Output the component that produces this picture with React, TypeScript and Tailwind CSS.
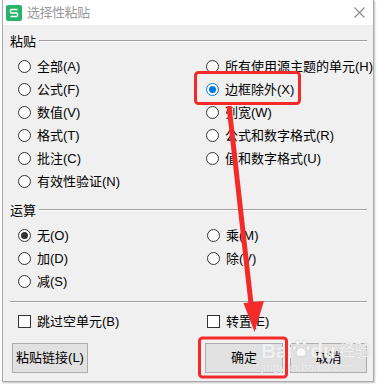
import React from "react";

const FONT = { fontFamily: '"Liberation Sans", "Noto Sans CJK SC", sans-serif' };

type RadioProps = { label: string; checked?: boolean; tone?: "blue" | "dark" };

function Radio({ label, checked = false, tone = "dark" }: RadioProps) {
    const ring = checked && tone === "blue" ? "border-[#0078d7]" : "border-[#333333]";
    const dot = tone === "blue" ? "bg-[#0078d7]" : "bg-[#333333]";
    return (
        <div className="h-[23px] flex items-center gap-[6px]">
            <span className={`w-[13px] h-[13px] rounded-full border ${ring} bg-white flex items-center justify-center flex-shrink-0`}>
                {checked && <span className={`w-[7px] h-[7px] rounded-full ${dot}`} />}
            </span>
            <span className="text-[13px] leading-none text-black whitespace-nowrap">{label}</span>
        </div>
    );
}

function Check({ label }: { label: string }) {
    return (
        <div className="h-[23px] flex items-center gap-[6px]">
            <span className="w-[13px] h-[13px] border border-[#333333] bg-white flex-shrink-0" />
            <span className="text-[13px] leading-none text-black whitespace-nowrap">{label}</span>
        </div>
    );
}

function Section({ title }: { title: string }) {
    return (
        <div className="h-[16px] flex items-center pl-[7px] pr-[6px] gap-[3px]">
            <span className="text-[13px] leading-none text-black">{title}</span>
            <div className="flex-1 flex flex-col">
                <div className="h-px bg-[#a0a0a0]" />
                <div className="h-px bg-white" />
            </div>
        </div>
    );
}

function Btn({ label, className = "" }: { label: string; className?: string }) {
    return (
        <div className={`h-[30px] w-[76px] bg-[#e1e1e1] border border-[#adadad] flex items-center justify-center text-[13px] text-black ${className}`}>
            {label}
        </div>
    );
}

export default function App() {
    return (
        <div className="relative w-[377px] h-[384px] bg-white overflow-hidden" style={FONT}>
            {/* dialog */}
            <div className="ml-[2px] w-[372px] h-[382px] flex flex-col border-x border-b border-[#a8a8a8] bg-[#f0f0f0] shadow-[1px_1px_2px_rgba(0,0,0,0.25)]">
                {/* title bar */}
                <div className="h-[25px] bg-white flex items-center pl-[3px] pr-[8px] flex-shrink-0">
                    <div className="w-[16px] h-[16px] rounded-[2px] bg-[#27b46a] flex items-center justify-center">
                        <svg width="10" height="10" viewBox="0 0 10 10">
                            <path d="M8.5 1.5H2.2L1.5 2.2V4.3L2.2 5H7.8L8.5 5.7V7.8L7.8 8.5H1.5" fill="none" stroke="white" strokeWidth="1.4" />
                        </svg>
                    </div>
                    <span className="ml-[5px] text-[13px] text-[#9a9a9a] tracking-[-0.5px]">选择性粘贴</span>
                    <div className="flex-1" />
                    <svg width="11" height="11" viewBox="0 0 11 11">
                        <path d="M0.5 0.5L10.5 10.5M10.5 0.5L0.5 10.5" stroke="#8a8a8a" strokeWidth="1.1" />
                    </svg>
                </div>

                {/* body */}
                <div className="flex-1 flex flex-col pt-[8px]">
                    <Section title="粘贴" />
                    <div className="flex pl-[15px] mt-[6px]">
                        <div className="w-[189px] flex flex-col">
                            <Radio label="全部(A)" />
                            <Radio label="公式(F)" />
                            <Radio label="数值(V)" />
                            <Radio label="格式(T)" />
                            <Radio label="批注(C)" />
                            <Radio label="有效性验证(N)" />
                        </div>
                        <div className="flex flex-col">
                            <Radio label="所有使用源主题的单元(H)" />
                            <Radio label="边框除外(X)" checked tone="blue" />
                            <Radio label="列宽(W)" />
                            <Radio label="公式和数字格式(R)" />
                            <Radio label="值和数字格式(U)" />
                        </div>
                    </div>

                    <div className="mt-[9px]">
                        <Section title="运算" />
                    </div>
                    <div className="flex pl-[15px] mt-[6px]">
                        <div className="w-[189px] flex flex-col">
                            <Radio label="无(O)" checked />
                            <Radio label="加(D)" />
                            <Radio label="减(S)" />
                        </div>
                        <div className="flex flex-col">
                            <Radio label="乘(M)" />
                            <Radio label="除(V)" />
                        </div>
                    </div>

                    <div className="mt-[8px] ml-[7px] mr-[6px] flex flex-col">
                        <div className="h-px bg-[#a0a0a0]" />
                        <div className="h-px bg-white" />
                    </div>

                    <div className="flex pl-[15px] mt-[7px]">
                        <div className="w-[189px]">
                            <Check label="跳过空单元(B)" />
                        </div>
                        <Check label="转置(E)" />
                    </div>

                    <div className="flex mt-[10px] pl-[9px]">
                        <Btn label="粘贴链接(L)" />
                        <div className="flex-1" />
                        <Btn label="确定" className="w-[78px]" />
                        <Btn label="取消" className="ml-[7px] mr-[6px] w-[77px]" />
                    </div>
                </div>
            </div>

            {/* watermark */}
            <div className="absolute left-[261px] top-[337px] flex flex-col pointer-events-none text-white/80 [text-shadow:0_0_1px_#b8b8b8]">
                <div className="h-[24px] flex items-end leading-none">
                    <span className="text-[21px] font-bold tracking-[-0.5px]">Bai</span>
                    <svg width="19" height="19" viewBox="0 0 20 20" className="mb-[3px] -mr-[1px]">
                        <g fill="white" fillOpacity="0.8" stroke="#c4c4c4" strokeWidth="0.6">
                            <ellipse cx="6" cy="4" rx="2.2" ry="2.8" />
                            <ellipse cx="13" cy="4" rx="2.2" ry="2.8" />
                            <ellipse cx="2.5" cy="9.5" rx="2" ry="2.5" />
                            <ellipse cx="17" cy="9.5" rx="2" ry="2.5" />
                            <path d="M9.5 9C6 9 4 14 4.5 16.5C5 19 8 18 9.5 18C11 18 14 19 14.8 16.5C15.5 14 13 9 9.5 9Z" />
                        </g>
                    </svg>
                    <span className="text-[21px] font-bold">du</span>
                    <span className="text-[16px] ml-[3px] mb-[2px]">经验</span>
                </div>
                <span className="text-[11px] leading-[12px] tracking-[0.3px]">jingyan.baidu.com</span>
            </div>

            {/* red annotations */}
            <svg className="absolute left-0 top-0 pointer-events-none" width="377" height="384" viewBox="0 0 377 384">
                <rect x="195.5" y="72.5" width="104" height="31" rx="3" fill="none" stroke="#f42a2a" strokeWidth="3" />
                <rect x="199.5" y="338" width="87" height="39" rx="3" fill="none" stroke="#f42a2a" strokeWidth="3" />
                <path d="M229 106L251.5 308" stroke="#f42a2a" strokeWidth="5" />
                <path d="M243.5 303L264 301L254.5 332Z" fill="#f42a2a" />
            </svg>
        </div>
    );
}
